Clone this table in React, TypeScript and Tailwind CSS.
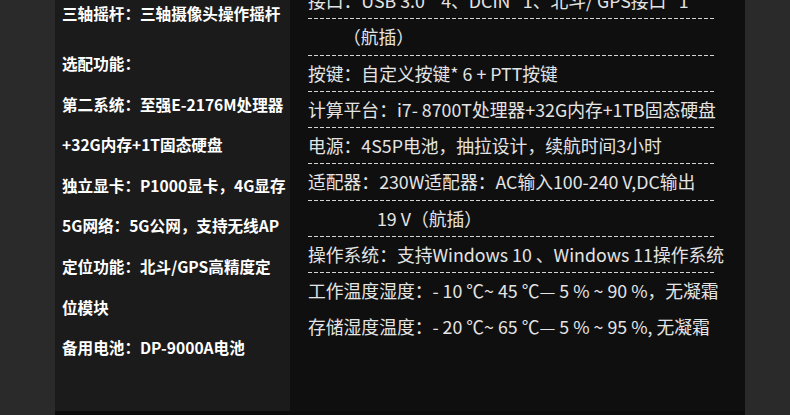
const leftRows = [
  "选配功能：",
  "第二系统：至强E-2176M处理器",
  "+32G内存+1T固态硬盘",
  "独立显卡：P1000显卡，4G显存",
  "5G网络：5G公网，支持无线AP",
  "定位功能：北斗/GPS高精度定",
  "位模块",
  "备用电池：DP-9000A电池",
];

// indent: px offset of the wrapped continuation lines
const specRows: { text: string; indent?: number; line: boolean }[] = [
  { text: "接口：USB 3.0 * 4、DCIN* 1、北斗/ GPS接口* 1", line: true },
  { text: "（航插）", indent: 35, line: true },
  { text: "按键：自定义按键* 6 + PTT按键", line: true },
  { text: "计算平台：i7- 8700T处理器+32G内存+1TB固态硬盘", line: true },
  { text: "电源：4S5P电池，抽拉设计，续航时间3小时", line: true },
  { text: "适配器：230W适配器：AC输入100-240 V,DC输出", line: true },
  { text: "19 V（航插）", indent: 69, line: true },
  { text: "操作系统：支持Windows 10 、Windows 11操作系统", line: true },
  { text: "工作温度湿度：- 10 ℃~ 45 ℃— 5 % ~ 90 %，无凝霜", line: false },
  { text: "存储湿度温度：- 20 ℃~ 65 ℃— 5 % ~ 95 %, 无凝霜", line: false },
];

function DashLine() {
  return (
    <div className="h-px w-[407px] bg-[repeating-linear-gradient(90deg,#d4d4d4_0px,#d4d4d4_4px,transparent_4px,transparent_6px)]" />
  );
}

export default function App() {
  return (
    <div
      className="flex h-[415px] w-[790px] overflow-hidden bg-[#2a2a2a]"
      style={{ fontFamily: '"Noto Sans CJK SC", "Noto Sans", sans-serif' }}
    >
      <div className="w-[55px] shrink-0" />

      <div className="flex flex-col">
        <div className="flex h-[411px]">
          {/* Left: optional config */}
          <div className="w-[235px] shrink-0 overflow-hidden bg-[#1b1b1b] pl-[7px]">
            <div className="-mt-[7px] flex flex-col text-[15.6px] font-bold whitespace-nowrap text-white">
              <div className="h-[40.6px] leading-[40.6px]">三轴摇杆：三轴摄像头操作摇杆</div>
              <div className="h-[9.4px]" />
              {leftRows.map((r) => (
                <div key={r} className="h-[40.6px] leading-[40.6px]">
                  {r}
                </div>
              ))}
            </div>
          </div>

          {/* Right: spec sheet */}
          <div className="w-[455px] shrink-0 overflow-hidden bg-[#0f0f0f] pl-[18px]">
            <div className="-mt-[17px] flex flex-col text-[17.8px] whitespace-nowrap text-[#e4e4e4]">
              {specRows.map((r) => (
                <div key={r.text}>
                  <div className="h-[35.3px] leading-[35.3px]" style={{ paddingLeft: r.indent ?? 0 }}>
                    {r.text}
                  </div>
                  {r.line && <DashLine />}
                </div>
              ))}
            </div>
          </div>
        </div>
        <div className="h-[4px] bg-[#0c0c0c]" />
      </div>

      <div className="flex-1" />
    </div>
  );
}
